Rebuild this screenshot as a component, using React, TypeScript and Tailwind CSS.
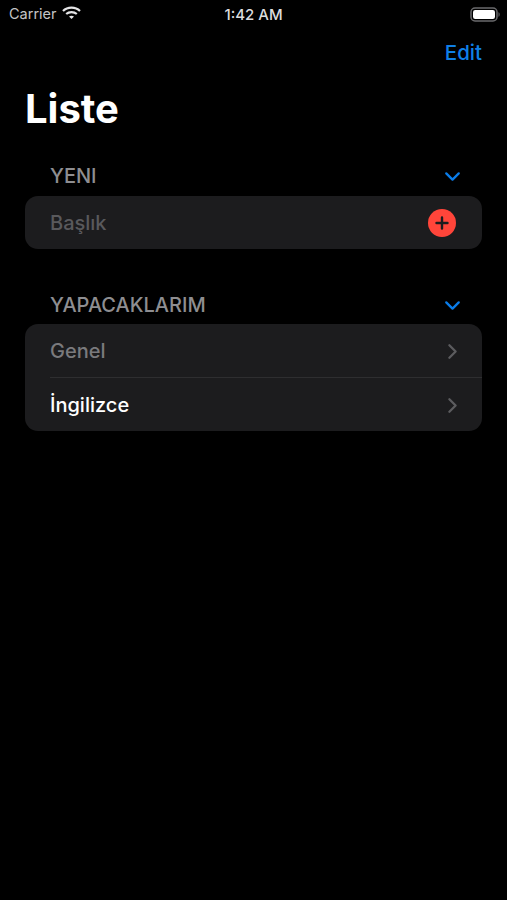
import { ChevronDown, ChevronRight } from 'lucide-react';

function SectionHeader({ title }: { title: string }) {
  return (
    <div className="flex items-center justify-between h-[20px] pl-[50px] pr-[42px]">
      <span className="text-[20px] font-medium text-[#8e8e91] leading-none">{title}</span>
      <ChevronDown size={25} strokeWidth={2.2} className="text-[#0a7ce8]" />
    </div>
  );
}

function ListRow({ label, muted }: { label: string; muted?: boolean }) {
  return (
    <div className="flex items-center justify-between h-[53px] pl-[25px] pr-[17px]">
      <span className={`pt-[1px] text-[20px] font-medium leading-none ${muted ? 'text-[#7a7a7d]' : 'text-white'}`}>{label}</span>
      <ChevronRight size={25} strokeWidth={2.2} className="mt-[2px] text-[#5c5c5f]" />
    </div>
  );
}

export default function App() {
  return (
    <div className="w-[507px] h-[900px] bg-black overflow-hidden font-['Inter',sans-serif]">
      {/* status bar */}
      <div className="relative flex items-center justify-between h-[28px] pl-[9px] pr-[6px]">
        <div className="flex items-center gap-[5px]">
          <span className="pt-[1px] text-[14.5px] text-[#c4c4c6] leading-none">Carrier</span>
          <svg width="19" height="14" viewBox="0 0 19 14" fill="none" stroke="#e4e4e6" strokeWidth="2.2" className="-mt-[3px]">
            <path d="M1 5 C5.5 0.6 13.5 0.6 18 5" />
            <path d="M4.2 8 C7 5.5 12 5.5 14.8 8" />
            <path d="M9.5 13 L7 10.4 C8.4 9.4 10.6 9.4 12 10.4 Z" fill="#e4e4e6" stroke="none" />
          </svg>
        </div>
        <span className="absolute left-0 right-0 pt-[1px] text-center text-[15px] font-medium text-[#dcdcde] leading-none">1:42 AM</span>
        <svg width="31" height="15" viewBox="0 0 31 15" fill="none">
          <rect x="1" y="1" width="26" height="13" rx="4" stroke="#6a6a6c" strokeWidth="1.5" />
          <rect x="3" y="3" width="22" height="9" rx="2.2" fill="#fff" />
          <path d="M28.5 5.2 C30 5.7 30 9.3 28.5 9.8 Z" fill="#6a6a6c" />
        </svg>
      </div>

      {/* nav */}
      <div className="flex items-center justify-end h-[50px] pr-[25px]">
        <span className="text-[20.5px] font-medium text-[#0f7fe6] leading-none">Edit</span>
      </div>

      {/* title */}
      <h1 className="h-[62px] pl-[25px] text-[40px] font-bold text-white leading-[62px]">Liste</h1>

      <div className="mt-[26px]">
        <SectionHeader title="YENI" />
      </div>
      <div className="mx-[25px] mt-[10px] h-[53px] rounded-[13px] bg-[#1c1c1e] flex items-center justify-between pl-[25px] pr-[26px]">
        <span className="pt-[1px] text-[20px] font-medium text-[#59595c] leading-none">Başlık</span>
        <span className="flex items-center justify-center w-[28px] h-[28px] rounded-full bg-[#ff453a]">
          <svg width="14" height="14" viewBox="0 0 14 14" stroke="#1c1c1e" strokeWidth="2.4" strokeLinecap="round">
            <path d="M7 1.5 V12.5 M1.5 7 H12.5" />
          </svg>
        </span>
      </div>

      <div className="mt-[46px]">
        <SectionHeader title="YAPACAKLARIM" />
      </div>
      <div className="mx-[25px] mt-[9px] rounded-[13px] bg-[#1c1c1e] overflow-hidden">
        <ListRow label="Genel" muted />
        <div className="ml-[25px] h-px bg-[#2e2e30]" />
        <ListRow label="İngilizce" />
      </div>
    </div>
  );
}
